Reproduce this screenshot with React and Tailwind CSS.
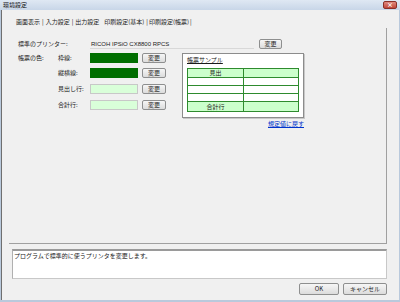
import React from "react";

const font = { fontFamily: '"Noto Sans CJK JP", "Liberation Sans", sans-serif' };

function Btn({ children, className = "" }) {
  return (
    <div
      className={`flex items-center justify-center border border-[#8e8f8f] rounded-[2px] bg-gradient-to-b from-[#f6f6f6] to-[#dcdcdc] text-[6px] text-[#222] leading-none ${className}`}
    >
      {children}
    </div>
  );
}

function ColorRow({ label, color, light }) {
  return (
    <div className="flex items-center h-[10px]">
      <div className="w-[32px] text-[6px] leading-none">{label}</div>
      <div
        className={`w-[48px] h-[10px] ${light ? "border border-[#c8c8c8]" : ""}`}
        style={{ backgroundColor: color }}
      ></div>
      <Btn className="ml-[4px] w-[24px] h-[10px]">変更</Btn>
    </div>
  );
}

export default function App() {
  return (
    <div
      className="w-[400px] h-[302px] flex flex-col bg-[#b9c9dc] text-[#1a1a1a] overflow-hidden"
      style={font}
    >
      {/* title bar */}
      <div className="h-[10px] flex items-center justify-between bg-gradient-to-b from-[#dfe8f3] to-[#c8d6e8] pl-[3px] pr-[3px]">
        <span className="text-[6px] leading-none text-[#111]">環境設定</span>
        <div className="w-[14px] h-[8px] rounded-[2px] bg-gradient-to-b from-[#e08a80] to-[#c0463a] border border-[#8a3028] flex items-center justify-center text-white text-[6px] leading-none font-bold">
          ×
        </div>
      </div>

      <div className="flex-1 flex flex-col mx-[1px] mb-[2px] bg-[#f0f0f0] border-l border-[#6f6f6f]">
        {/* tabs */}
        <div className="h-[18px] flex items-end pl-[14px] pb-[3px] text-[6px] leading-none text-[#222]">
          <span>画面表示</span>
          <span className="mx-[2px]">|</span>
          <span>入力設定</span>
          <span className="mx-[2px]">|</span>
          <span>出力設定</span>
          <span className="ml-[5px] mr-[1px]">印刷設定(基本)</span>
          <span className="mx-[1px]">|</span>
          <span>印刷設定(帳票)</span>
          <span className="mx-[1px]">|</span>
        </div>

        {/* tab panel */}
        <div className="h-[216px] ml-[7px] mr-[12px] border-r border-b border-[#a0a0a0] flex flex-col pl-[9px] pt-[11px]">
          <div className="flex items-center h-[10px]">
            <div className="w-[72px] text-[6px] leading-none">標準のプリンター:</div>
            <div className="w-[164px] h-[9px] bg-[#f0f0f0] border-b border-[#d8d8d8] flex items-center pl-[1px] text-[6px] leading-none" style={{ fontFamily: '"Liberation Sans", sans-serif' }}>
              RICOH IPSiO CX8800 RPCS
            </div>
            <Btn className="ml-[5px] w-[23px] h-[10px]">変更</Btn>
          </div>

          <div className="flex mt-[4px]">
            <div className="w-[40px] pt-[2px] text-[6px] leading-none">帳票の色:</div>
            <div className="flex flex-col gap-[5px]">
              <ColorRow label="枠線:" color="#006e00" />
              <ColorRow label="縦横線:" color="#006e00" />
              <div className="mt-[1px] flex flex-col gap-[6px]">
                <ColorRow label="見出し行:" color="#d9ffd9" light />
                <ColorRow label="合計行:" color="#d9ffd9" light />
              </div>
            </div>

            <div className="ml-[16px] flex flex-col items-end">
              <div className="w-[122px] h-[65px] bg-white border border-[#8c8c8c] shadow-[1px_1px_0_#c8c8c8] flex flex-col px-[4px] pt-[3px]">
                <div className="text-[6px] leading-none underline">帳票サンプル</div>
                <div className="mt-[5px] border border-[#2e8b2e] grid grid-cols-[56px_1fr] text-[6px] leading-none">
                  <div className="h-[9px] bg-[#ccffcc] border-r border-b border-[#2e8b2e] flex items-center justify-center">見出</div>
                  <div className="h-[9px] bg-[#ccffcc] border-b border-[#2e8b2e]"></div>
                  <div className="h-[8px] border-r border-b border-[#2e8b2e]"></div>
                  <div className="h-[8px] border-b border-[#2e8b2e]"></div>
                  <div className="h-[8px] border-r border-b border-[#2e8b2e]"></div>
                  <div className="h-[8px] border-b border-[#2e8b2e]"></div>
                  <div className="h-[8px] border-r border-b border-[#2e8b2e]"></div>
                  <div className="h-[8px] border-b border-[#2e8b2e]"></div>
                  <div className="h-[9px] bg-[#ccffcc] border-r border-[#2e8b2e] flex items-center justify-center">合計行</div>
                  <div className="h-[9px] bg-[#ccffcc]"></div>
                </div>
              </div>
              <a className="mt-[3px] text-[6px] leading-none text-[#0033cc] underline">規定値に戻す</a>
            </div>
          </div>
        </div>

        {/* description */}
        <div className="mt-[5px] ml-[10px] mr-[12px] h-[30px] bg-white border-t-2 border-[#9a9a9a] border-l border-b border-r border-l-[#b0b0b0] border-b-[#c8c8c8] border-r-[#c8c8c8] px-[1px] pt-[2px] text-[6px] leading-none">
          プログラムで標準的に使うプリンタを変更します。
        </div>

        {/* buttons */}
        <div className="flex justify-end gap-[4px] mr-[12px] mt-[4px]">
          <Btn className="w-[40px] h-[12px]">OK</Btn>
          <Btn className="w-[44px] h-[12px]">キャンセル</Btn>
        </div>
      </div>
    </div>
  );
}
